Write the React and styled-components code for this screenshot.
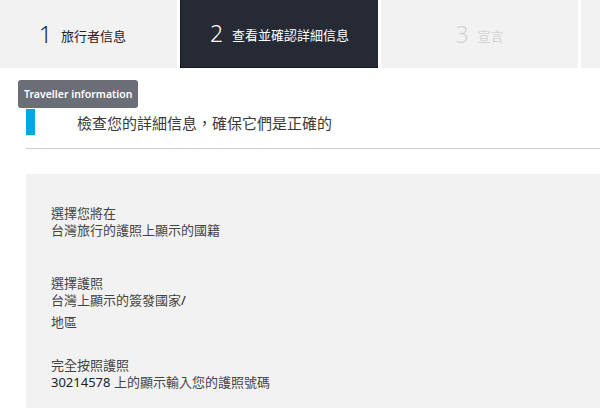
import React from 'react'
import styled, { createGlobalStyle } from 'styled-components'

const GlobalStyle = createGlobalStyle`
  body {
    margin: 0;
    background: #fff;
    font-family: "Noto Sans", "Noto Sans CJK TC", sans-serif;
    overflow: hidden;
  }
`

const Steps = styled.div`
  display: flex;
  gap: 3px;
  height: 68px;
  overflow: hidden;
`

const Step = styled.div`
  flex: ${p => (p.width ? `0 0 ${p.width}px` : '1')};
  display: flex;
  align-items: center;
  justify-content: center;
  gap: 9px;
  box-sizing: border-box;
  padding-right: ${p => p.shift || 0}px;
  background: ${p => (p.active ? '#252a34' : '#f2f2f2')};
  border-left: ${p => (p.active ? '1px solid #15181e' : 'none')};
  border-bottom: ${p => (p.active ? '1px solid #15181e' : 'none')};
  color: ${p => (p.active ? '#fff' : p.disabled ? '#d2d2d2' : '#222')};
`

const StepNum = styled.span`
  font-size: 23px;
  font-weight: 300;
  line-height: 1;
`

const StepLabel = styled.span`
  font-size: 13px;
  padding-top: 2px;
`

const Main = styled.div`
  position: relative;
  padding: 41px 0 0 26px;
`

const Tooltip = styled.div`
  position: absolute;
  left: 18px;
  top: 12px;
  height: 28px;
  padding: 0 6px;
  display: flex;
  align-items: center;
  background: #6b6e76;
  border-radius: 3px;
  color: #fff;
  font-size: 10.5px;
  font-weight: 600;
`

const Heading = styled.div`
  display: flex;
  align-items: center;
  height: 26px;
  padding-bottom: 13px;
  border-bottom: 1px solid #cfcfcf;
`

const Bar = styled.div`
  width: 9px;
  height: 26px;
  background: #00a8e1;
`

const HeadingText = styled.div`
  margin-left: 42px;
  font-size: 15px;
  color: #3a3a3a;
`

const Panel = styled.div`
  margin-top: 25px;
  background: #f2f2f2;
  padding: 31px 25px 24px;
`

const Field = styled.div`
  margin-bottom: ${p => p.gap}px;
  font-size: 13px;
  line-height: 17px;
  color: #444;
`

const Line = styled.div`
  margin-top: ${p => p.offset || 0}px;
`

const Num = styled.span`
  color: #222;
`

export default function App() {
  return (
    <>
      <GlobalStyle />
      <Steps>
        <Step width={177} shift={12}>
          <StepNum>1</StepNum>
          <StepLabel>旅行者信息</StepLabel>
        </Step>
        <Step width={198} active>
          <StepNum>2</StepNum>
          <StepLabel>查看並確認詳細信息</StepLabel>
        </Step>
        <Step width={197} disabled>
          <StepNum>3</StepNum>
          <StepLabel>宣言</StepLabel>
        </Step>
        <Step />
      </Steps>
      <Main>
        <Tooltip>Traveller information</Tooltip>
        <Heading>
          <Bar />
          <HeadingText>檢查您的詳細信息，確保它們是正確的</HeadingText>
        </Heading>
        <Panel>
          <Field gap={36}>
            <Line>選擇您將在</Line>
            <Line>台灣旅行的護照上顯示的國籍</Line>
          </Field>
          <Field gap={26}>
            <Line>選擇護照</Line>
            <Line>台灣上顯示的簽發國家<Num>/</Num></Line>
            <Line offset={5}>地區</Line>
          </Field>
          <Field gap={0}>
            <Line>完全按照護照</Line>
            <Line><Num>30214578</Num> 上的顯示輸入您的護照號碼</Line>
          </Field>
        </Panel>
      </Main>
    </>
  )
}
